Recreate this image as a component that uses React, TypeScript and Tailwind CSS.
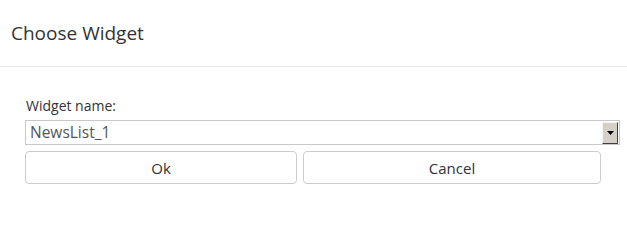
export default function App() {
  return (
    <div className="w-[627px] h-[211px] bg-white text-[#333] font-['Open_Sans',sans-serif]">
      <div className="h-[67px] border-b border-[#e5e5e5] pl-[11px] pt-[20px]">
        <h1 className="text-[19px] leading-[26px] text-[#333]">Choose Widget</h1>
      </div>
      <div className="pl-[25px] pt-[30px]">
        <div className="text-[14px] leading-[17px] pl-[1px] text-[#333]">Widget name:</div>
        <div className="mt-[6px] w-[595px] h-[25px] border border-[#c8c8c8] flex items-center">
          <span className="flex-1 pl-[4px] text-[15.5px] text-[#555]">NewsList_1</span>
          <div className="w-[16px] h-[22px] mr-[1px] bg-[#d4d0c8] border-t border-l border-t-[#f4f3ee] border-l-[#f4f3ee] border-r border-b border-r-[#404040] border-b-[#404040] flex items-center justify-center">
            <svg width="7" height="4" viewBox="0 0 7 4">
              <path d="M0 0h7L3.5 4z" fill="#000" />
            </svg>
          </div>
        </div>
        <div className="mt-[6px] flex gap-[6px]">
          <button className="w-[272px] h-[33px] pt-[2px] rounded-[4px] border border-[#cccccc] bg-white text-[15px] text-[#333]">
            Ok
          </button>
          <button className="w-[298px] h-[33px] pt-[2px] rounded-[4px] border border-[#cccccc] bg-white text-[15px] text-[#333]">
            Cancel
          </button>
        </div>
      </div>
    </div>
  );
}
